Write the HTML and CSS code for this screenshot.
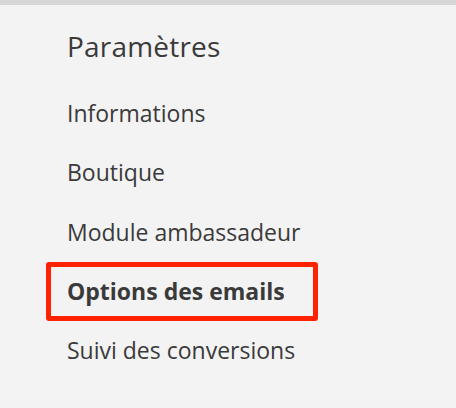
FILE: index.html
```html
<!DOCTYPE html>
<html lang="fr">
<head>
<meta charset="utf-8">
<link rel="stylesheet" href="styles.css">
</head>
<body>
<div class="topbar"></div>
<nav class="settings">
  <h2 class="title">Paramètres</h2>
  <ul class="menu">
    <li class="item">Informations</li>
    <li class="item">Boutique</li>
    <li class="item">Module ambassadeur</li>
    <li class="item active">Options des emails</li>
    <li class="item">Suivi des conversions</li>
  </ul>
</nav>
</body>
</html>
```
FILE: styles.css
```css
html, body {
  margin: 0;
  padding: 0;
  background: #f3f3f3;
  height: 100%;
}
body {
  font-family: "Open Sans", "Noto Sans", sans-serif;
  color: #333;
  overflow: hidden;
}
.topbar {
  height: 5px;
  background: #d6d6d6;
}
.settings {
  padding: 0 0 0 67px;
}
.title {
  margin: 0;
  padding-top: 23px;
  font-size: 28px;
  letter-spacing: 0.2px;
  line-height: 36px;
  font-weight: 400;
  color: #3a3a3a;
}
.menu {
  list-style: none;
  margin: 34px 0 0 0;
  padding: 0;
  display: flex;
  flex-direction: column;
  gap: 29.3px;
}
.item {
  font-size: 23px;
  line-height: 30px;
  color: #3a3a3a;
}
.item.active {
  font-weight: 700;
  position: relative;
}
.item.active::before {
  content: "";
  position: absolute;
  box-sizing: border-box;
  left: -21px;
  top: -14px;
  width: 272px;
  height: 59px;
  border: 5.5px solid #ff2200;
  border-radius: 3px;
}
```
